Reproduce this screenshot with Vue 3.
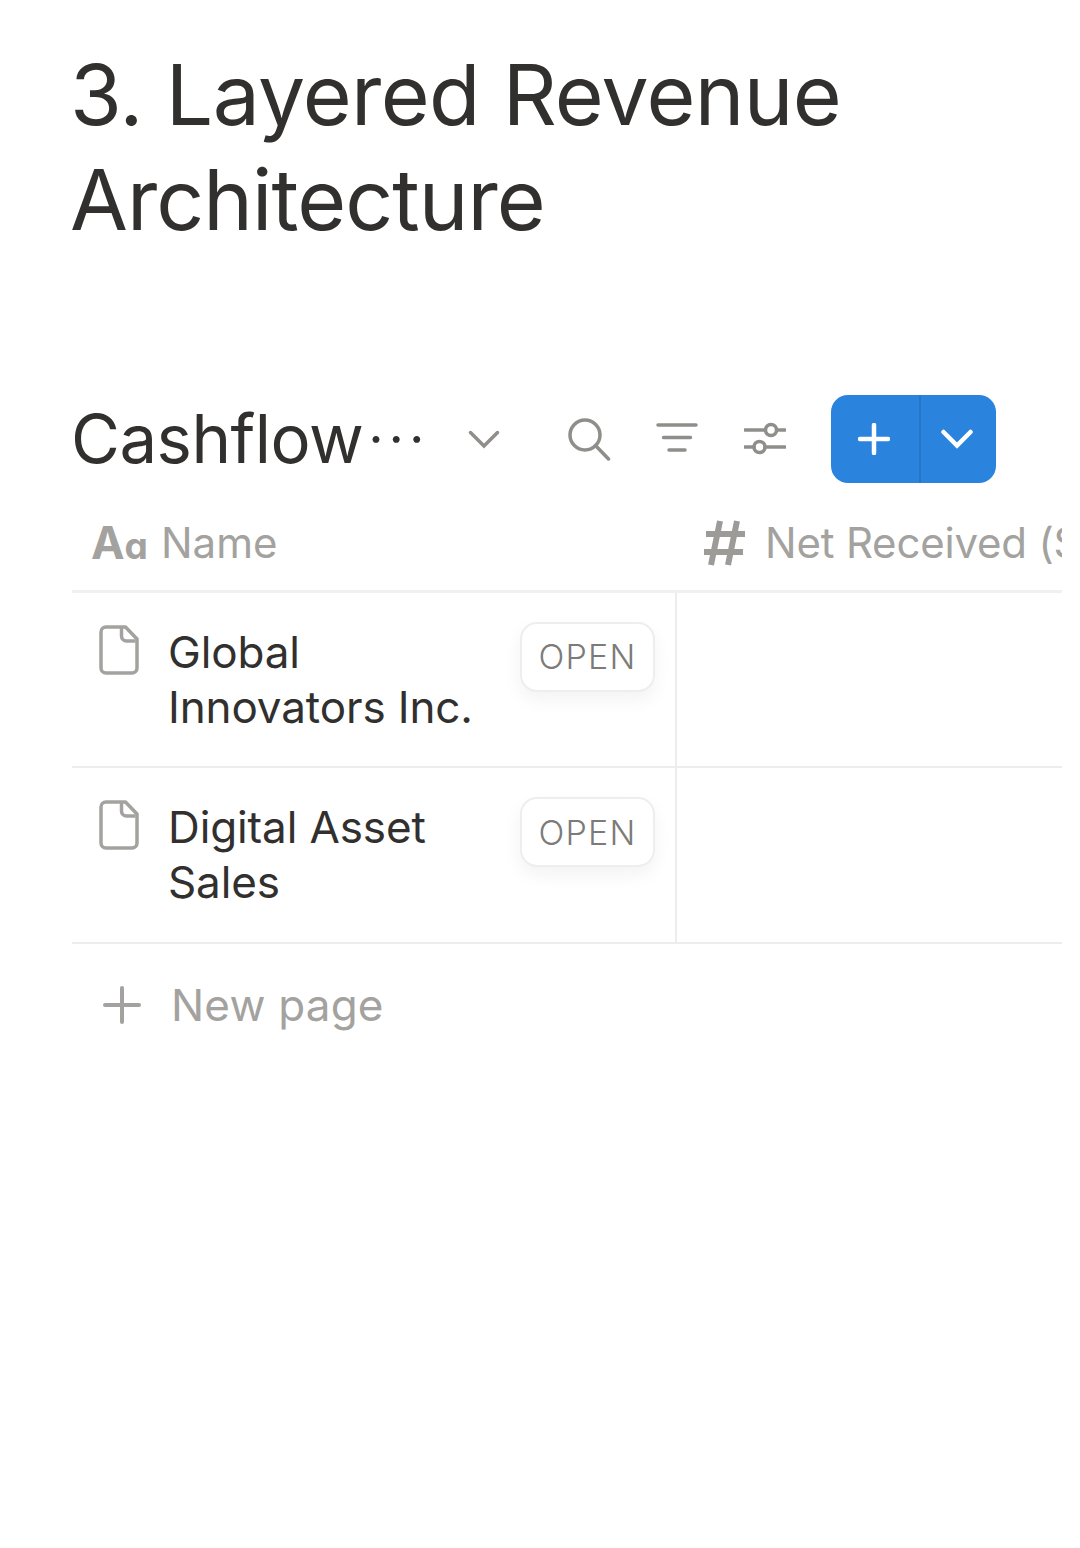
<script setup>
const rows = [
  { id: 1, lines: ['Global', 'Innovators Inc.'] },
  { id: 2, lines: ['Digital Asset', 'Sales'] },
]
</script>

<template>
  <main class="page">
    <h1 class="title">3. Layered Revenue<br /><span class="title-second">Architecture</span></h1>

    <div class="toolbar">
      <div class="view">
        <span class="view-name">Cashflow</span><span class="dots">···</span>
      </div>
      <svg class="ico chev" viewBox="0 0 32 20" fill="none"><path d="M2.5 3.5 16 17 29.5 3.5" /></svg>
      <svg class="ico search" viewBox="0 0 44 44" fill="none"><circle cx="18" cy="18" r="15" /><path d="M28.5 28.5 41.5 42" /></svg>
      <svg class="ico filter" viewBox="0 0 44 36" fill="none"><path d="M2 4h38M7.500 16.500h27M13 29h16" /></svg>
      <svg class="ico sliders" viewBox="0 0 42 36" fill="none">
        <path d="M1 9h20M33 9h8M1 26h9M21 26h20" />
        <circle cx="27" cy="9" r="5.500" /><circle cx="15.500" cy="26" r="5.500" />
      </svg>
      <div class="new-btn">
        <span class="new-plus">
          <svg viewBox="0 0 32 32" fill="none"><path d="M16 2v28M2 16h28" /></svg>
        </span>
        <span class="new-caret">
          <svg viewBox="0 0 32 20" fill="none"><path d="M2.500 3 16 16.500 29.500 3" /></svg>
        </span>
      </div>
    </div>

    <div class="table">
      <div class="head">
        <div class="head-cell name-col">
          <span class="aa"><span class="aa-a">A</span><span class="aa-b">ɑ</span></span>
          <span>Name</span>
        </div>
        <div class="head-cell net-col">
          <svg class="hash" viewBox="0 0 42 48" fill="none">
            <path d="M17 2 8 46M34 2 25 46M3 15h39M1 33h39" />
          </svg>
          <span class="clip">Net Received ($)</span>
        </div>
      </div>

      <div v-for="row in rows" :key="row.id" class="row">
        <div class="cell name-col">
          <svg class="doc" viewBox="0 0 40 50" fill="none">
            <path class="doc-body" d="M7 2h19.500L38 14v29a5 5 0 0 1-5 5H7a5 5 0 0 1-5-5V7a5 5 0 0 1 5-5Z" />
            <path class="doc-fold" d="M22.500 3v8a5 5 0 0 0 5 5h9" />
          </svg>
          <div class="row-name">
            <div v-for="line in row.lines" :key="line">{{ line }}</div>
          </div>
          <span class="open">OPEN</span>
        </div>
        <div class="cell net-col"></div>
      </div>

      <div class="new-page">
        <svg viewBox="0 0 38 38" fill="none"><path d="M19 2v34M2 19h34" /></svg>
        <span>New page</span>
      </div>
    </div>
  </main>
</template>

<style>
html, body { margin: 0; background: #fff; }
</style>

<style scoped>
.page {
  box-sizing: border-box;
  width: 1080px;
  height: 1548px;
  padding: 42px 18px 0 72px;
  overflow: hidden;
  background: #fff;
  font-family: Inter, "Liberation Sans", sans-serif;
  color: #2f2f2d;
}
.title {
  margin: 0 0 0 -2px;
  font-size: 84px;
  line-height: 105px;
  font-weight: 370;
  letter-spacing: -0.67px;
  color: #31302e;
}
.title-second { letter-spacing: -0.95px; }
.toolbar {
  display: flex;
  align-items: center;
  height: 88px;
  margin-top: 143px;
}
.view { display: flex; align-items: center; width: 396px; }
.view-name { margin-left: -1px; font-size: 67px; line-height: 88px; font-weight: 370; color: #31302e; letter-spacing: -0.5px; }
.dots { font-size: 52px; line-height: 60px; letter-spacing: 5.500px; color: #31302e; margin-left: 5px; }
.ico { flex: none; stroke: #8f8e8a; stroke-width: 3.500; stroke-linecap: round; }
.chev { width: 32px; height: 20px; }
.search { width: 44px; height: 44px; margin-left: 67px; }
.filter { width: 44px; height: 36px; margin-left: 45px; }
.sliders { width: 42px; height: 36px; margin-left: 44px; }
.new-btn {
  display: flex;
  width: 165px;
  height: 88px;
  margin-left: 45px;
  border-radius: 17px;
  overflow: hidden;
  background: #2a83dc;
}
.new-plus {
  display: flex;
  align-items: center;
  justify-content: center;
  box-sizing: border-box;
  width: 90px;
  padding-right: 2px;
  border-right: 2px solid #2477c9;
}
.new-caret { display: flex; align-items: center; justify-content: center; flex: 1; padding-right: 4px; }
.new-plus svg { width: 32px; height: 32px; }
.new-caret svg { width: 32px; height: 20px; }
.new-btn svg { stroke: #fff; stroke-width: 4.500; stroke-linecap: round; }
.table { width: 990px; overflow: hidden; }
.head {
  display: flex;
  height: 109.500px;
  box-sizing: border-box;
  padding-top: 13px;
  border-bottom: 3px solid #f0f0ef;
  color: #a3a29f;
  font-size: 42px;
  font-weight: 370;
}
.name-col { box-sizing: border-box; flex: none; width: 605px; }
.net-col { flex: none; width: 385px; box-sizing: border-box; }
.head-cell { display: flex; align-items: center; white-space: nowrap; overflow: hidden; }
.head .name-col { padding-left: 19px; }
.head .net-col { padding-left: 26px; }
.aa { display: inline-flex; align-items: baseline; margin-right: 13px; font-weight: 700; color: #a3a29f; }
.aa-a { font-size: 45px; }
.aa-b { font-size: 37px; }
.hash { flex: none; width: 42px; height: 48px; margin-right: 20px; stroke: #9c9b97; stroke-width: 6; }
.clip { display: block; letter-spacing: -0.2px; }
.row { display: flex; height: 175.500px; box-sizing: border-box; border-bottom: 2px solid #ededec; }
.cell { display: flex; align-items: flex-start; }
.row .name-col { position: relative; padding: 32px 0 0 27px; border-right: 2px solid #ededec; }
.doc { flex: none; width: 40px; height: 50px; stroke: #a3a29f; stroke-width: 3.500; stroke-linejoin: round; }
.row-name { margin-left: 29px; font-size: 44px; line-height: 55px; font-weight: 370; color: #31302e; letter-spacing: -0.12px; }
.open {
  position: absolute;
  top: 29px;
  left: 448px;
  box-sizing: border-box;
  width: 135px;
  height: 70px;
  display: flex;
  align-items: center;
  justify-content: center;
  border: 2px solid #eeeeed;
  border-radius: 17px;
  background: #fff;
  box-shadow: 0 8px 18px rgba(0, 0, 0, 0.05);
  font-size: 34px;
  font-weight: 350;
  letter-spacing: 1.200px;
  color: #7c7b78;
}
.new-page {
  display: flex;
  align-items: center;
  height: 122px;
  padding-left: 31px;
  font-size: 44px;
  font-weight: 370;
  letter-spacing: 0.2px;
  color: #a3a29f;
}
.new-page svg { width: 38px; height: 38px; margin-right: 30px; stroke: #a3a29f; stroke-width: 4; stroke-linecap: round; }
</style>
